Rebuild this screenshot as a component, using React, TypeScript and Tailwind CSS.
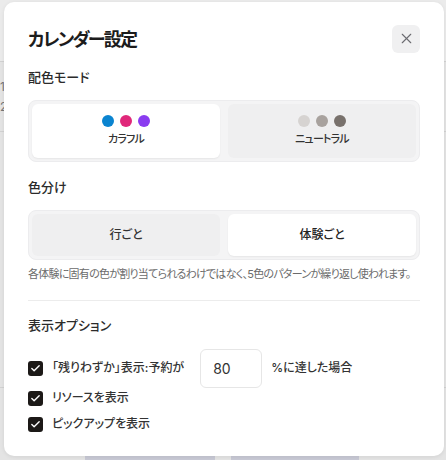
import React from "react";
import { X, Check } from "lucide-react";

const colorful = ["bg-[#0a84d0]", "bg-[#e0287a]", "bg-[#8a3cf0]"];
const neutral = ["bg-[#d6d3d1]", "bg-[#a8a29e]", "bg-[#78716c]"];

const options = [
  { label: "リソースを表示" },
  { label: "ピックアップを表示" },
];

const CheckBox = () => (
  <span className="flex size-[15px] shrink-0 items-center justify-center rounded-[3px] bg-[#1c1917]">
    <Check size={11} strokeWidth={3} className="text-white" />
  </span>
);

const App = () => {
  return (
    <div
      className="relative h-[460px] w-[446px] overflow-hidden bg-[#e4e4e4] [font-feature-settings:'palt']"
      style={{ fontFamily: '"Inter", "Noto Sans CJK JP", sans-serif' }}
    >
      {/* page behind the dialog */}
      <div className="h-[62px] border-b border-[#d2d2d2] bg-[#ebebeb]" />
      <div className="flex h-[70px] flex-col justify-center gap-1 border-b border-[#d2d2d2] text-[12px] leading-4 text-[#777]">
        <span>1</span>
        <span>2</span>
      </div>
      <div className="flex h-[256px] border-b border-[#d2d2d2]" />
      <div className="mt-[66px] flex h-[10px] gap-4 pl-[85px]">
        <div className="w-[130px] bg-[#c8c9d5]" />
        <div className="w-[128px] bg-[#c8c9d5]" />
      </div>

      {/* dialog */}
      <div className="absolute left-1 top-[2px] h-[454px] w-[440px] rounded-[10px] bg-white px-6 pt-6 shadow-[0_1px_4px_rgba(0,0,0,0.08)]">
        <div className="flex items-center justify-between">
          <h2 className="text-[18px] font-bold leading-7 tracking-[-1.8px] text-[#1c1c1c]">カレンダー設定</h2>
          <button className="-mt-[3px] flex size-7 items-center justify-center rounded-md bg-[#f0f0f1] text-[#6b6b70]">
            <X size={17} strokeWidth={1.6} />
          </button>
        </div>

        <p className="mt-3 text-[13px] font-medium leading-[22px] text-[#2b2b2b]">配色モード</p>
        <div className="mt-3 flex h-[62px] gap-2 rounded-lg border border-[#ececee] bg-[#f4f4f5] p-[3px]">
          <div className="flex flex-1 flex-col items-center justify-center gap-1 rounded-md bg-white shadow-[0_1px_2px_rgba(0,0,0,0.06)]">
            <div className="flex gap-1.5">
              {colorful.map((c) => (
                <span key={c} className={`size-3 rounded-full ${c}`} />
              ))}
            </div>
            <span className="text-[11px] font-medium leading-4 tracking-[-0.8px] text-[#333]">カラフル</span>
          </div>
          <div className="flex flex-1 flex-col items-center justify-center gap-1 rounded-md bg-[#efeff0]">
            <div className="flex gap-1.5">
              {neutral.map((c) => (
                <span key={c} className={`size-3 rounded-full ${c}`} />
              ))}
            </div>
            <span className="text-[11px] font-medium leading-4 tracking-[-0.8px] text-[#333]">ニュートラル</span>
          </div>
        </div>

        <p className="mt-[14px] text-[13px] font-medium leading-[22px] text-[#2b2b2b]">色分け</p>
        <div className="mt-3 flex h-[50px] gap-2 rounded-lg border border-[#ececee] bg-[#f4f4f5] p-[3px]">
          <div className="flex flex-1 items-center justify-center rounded-md bg-[#efeff0] text-[12px] font-medium text-[#333]">
            行ごと
          </div>
          <div className="flex flex-1 items-center justify-center rounded-md bg-white text-[12px] font-medium text-[#222] shadow-[0_1px_2px_rgba(0,0,0,0.06)]">
            体験ごと
          </div>
        </div>
        <p className="mt-1.5 whitespace-nowrap text-[11px] leading-4 tracking-[-0.75px] text-[#6b6b6b]">
          各体験に固有の色が割り当てられるわけではなく、5色のパターンが繰り返し使われます。
        </p>

        <hr className="mt-[18px] border-[#ececec]" />

        <p className="mt-[13px] text-[13px] font-medium leading-[22px] text-[#2b2b2b]">表示オプション</p>
        <div className="mt-[18px] flex flex-col gap-[6px]">
          <div className="flex h-[28px] items-center">
            <CheckBox />
            <span className="ml-[9px] text-[12px] font-medium text-[#333]">「残りわずか」表示:予約が</span>
            <div className="ml-4 flex h-[39px] w-[62px] shrink-0 items-center rounded-md border border-[#e6e6e6] px-3 text-[14px] text-[#333]">
              80
            </div>
            <span className="ml-[9px] text-[12px] font-medium text-[#333]">%に達した場合</span>
          </div>
          {options.map((o) => (
            <div key={o.label} className="flex h-5 items-center">
              <CheckBox />
              <span className="ml-[9px] text-[12px] font-medium text-[#333]">{o.label}</span>
            </div>
          ))}
        </div>
      </div>
    </div>
  );
};

export default App;
